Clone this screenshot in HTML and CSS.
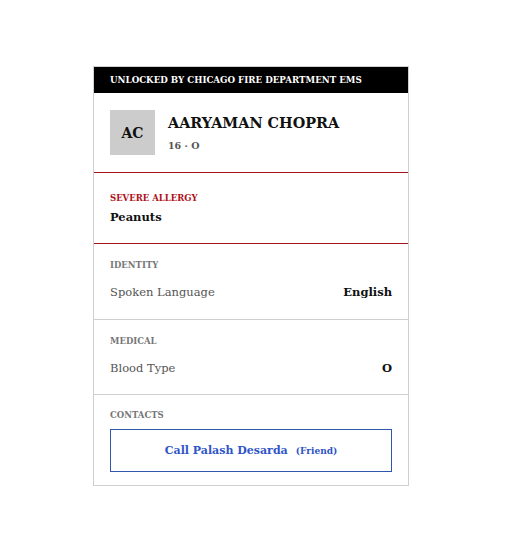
FILE: index.html
```html
<!DOCTYPE html>
<html>
<head>
<meta charset="utf-8">
<link rel="stylesheet" href="styles.css">
</head>
<body>
<div class="page">
  <div class="card">
    <div class="banner">UNLOCKED BY CHICAGO FIRE DEPARTMENT EMS</div>
    <div class="profile">
      <div class="avatar">AC</div>
      <div class="who">
        <div class="name">AARYAMAN CHOPRA</div>
        <div class="meta">16 · O</div>
      </div>
    </div>
    <div class="allergy">
      <div class="label red">SEVERE ALLERGY</div>
      <div class="allergen">Peanuts</div>
    </div>
    <div class="section identity">
      <div class="label">IDENTITY</div>
      <div class="row"><span class="key">Spoken Language</span><span class="val">English</span></div>
    </div>
    <div class="section">
      <div class="label">MEDICAL</div>
      <div class="row"><span class="key">Blood Type</span><span class="val">O</span></div>
    </div>
    <div class="section contacts">
      <div class="label">CONTACTS</div>
      <a class="call">Call Palash Desarda <span class="rel">(Friend)</span></a>
    </div>
  </div>
</div>
</body>
</html>
```

FILE: styles.css
```css
* { box-sizing: border-box; }
body {
  margin: 0;
  background: #fff;
  font-family: "DejaVu Serif", "Liberation Serif", serif;
  color: #111;
}
.page {
  padding: 66px 0 0 93px;
}
.card {
  width: 316px;
  border: 1px solid #cfcfcf;
  background: #fff;
}
.banner {
  background: #000;
  color: #fff;
  font-size: 8.7px;
  font-weight: bold;
  height: 26px;
  line-height: 26px;
  padding-left: 16px;
}
.profile {
  display: flex;
  align-items: center;
  gap: 13px;
  padding: 17px 16px 17px;
}
.avatar {
  width: 45px;
  height: 45px;
  background: #cccccc;
  display: flex;
  align-items: center;
  justify-content: center;
  font-weight: bold;
  font-size: 14px;
}
.name {
  font-size: 14.4px;
  font-weight: bold;
  line-height: 20px;
  margin-top: -1px;
}
.meta {
  font-size: 9.5px;
  font-weight: bold;
  color: #555;
  margin-top: 7px;
}
.allergy {
  border-top: 1px solid #a8141c;
  border-bottom: 1px solid #a8141c;
  padding: 19px 16px 0;
  height: 72px;
}
.label {
  font-size: 8.5px;
  font-weight: bold;
  color: #777;
  line-height: 12px;
}
.label.red { color: #b0101a; }
.allergen {
  font-size: 11.5px;
  font-weight: bold;
  margin-top: 6px;
}
.section {
  padding: 15px 16px 0;
  height: 75px;
  border-bottom: 1px solid #cfcfcf;
}
.section.identity { height: 76px; }
.row {
  display: flex;
  justify-content: space-between;
  margin-top: 14px;
  font-size: 11.5px;
}
.key { color: #555; }
.val { font-weight: bold; color: #111; }
.section.contacts {
  border-bottom: none;
  height: auto;
  padding-top: 14px;
  padding-bottom: 13px;
}
.call {
  display: flex;
  align-items: center;
  justify-content: center;
  margin-top: 8px;
  height: 43px;
  border: 1px solid #2f57ad;
  color: #2f55c8;
  font-weight: bold;
  font-size: 11px;
}
.rel {
  font-size: 9px;
  margin-left: 8px;
}
```
